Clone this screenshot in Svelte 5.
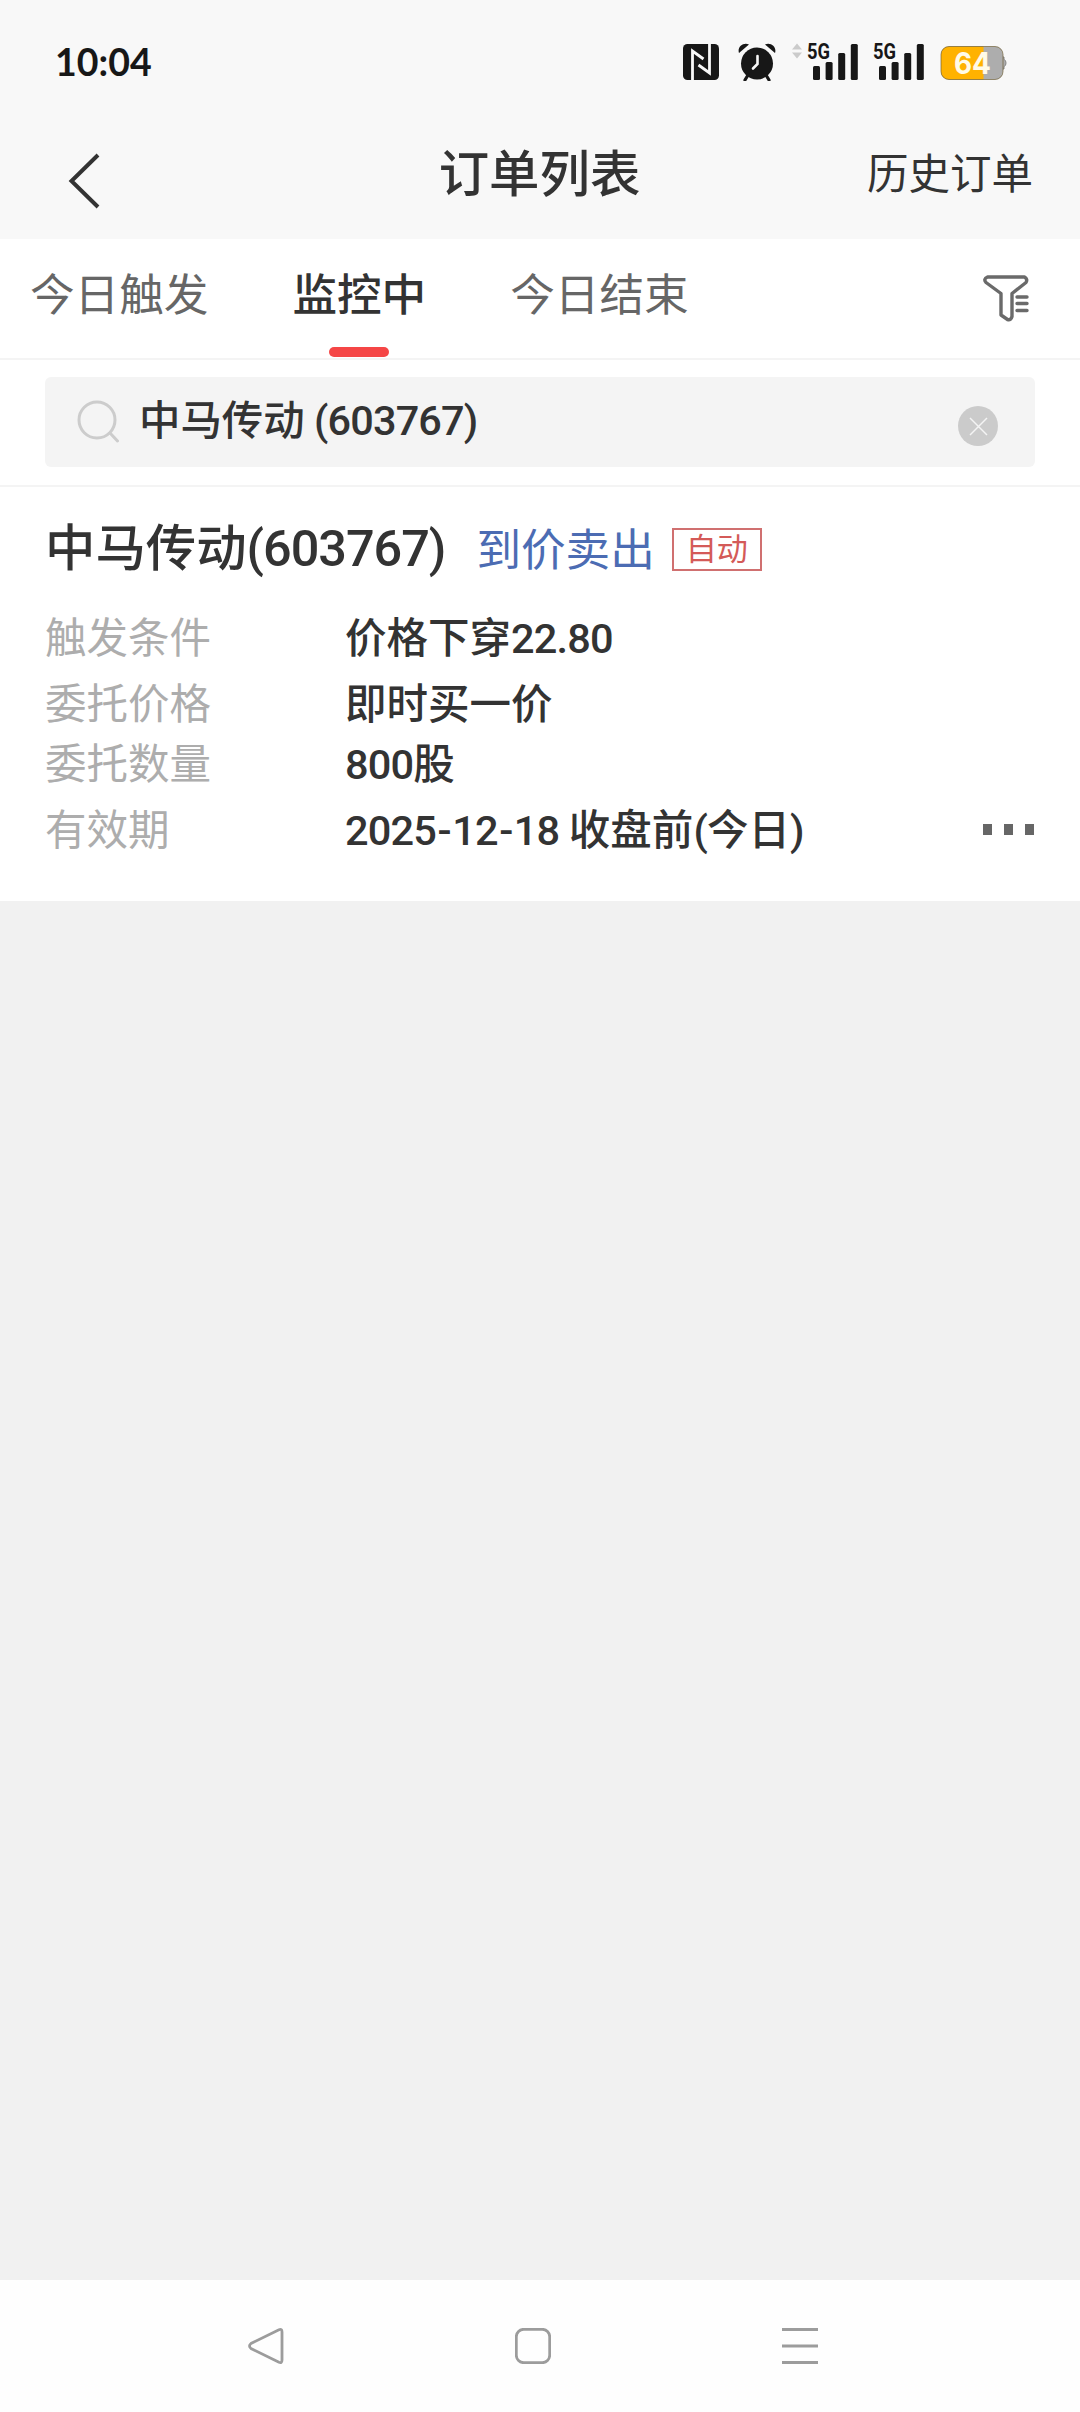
<script lang="ts">
	interface Tab {
		id: string;
		label: string;
	}

	interface OrderRow {
		label: string;
		value: string;
	}

	const tabs: Tab[] = [
		{ id: 'triggered', label: '今日触发' },
		{ id: 'watching', label: '监控中' },
		{ id: 'finished', label: '今日结束' }
	];

	const rows: OrderRow[] = [
		{ label: '触发条件', value: '价格下穿22.80' },
		{ label: '委托价格', value: '即时买一价' },
		{ label: '委托数量', value: '800股' },
		{ label: '有效期', value: '2025-12-18 收盘前(今日)' }
	];

	const signalBars = [14, 18, 27, 36];

	let activeTab = $state('watching');
	let keyword = $state('中马传动 (603767)');

	// digits are set a little tighter than the hanzi, dashes a little wider
	function splitText(text: string) {
		return text.match(/-|[\x20-\x2c\x2e-\x7e]+|[^\x20-\x7e]+/g) ?? [];
	}

	function isLatin(part: string) {
		return /^[\x20-\x7e]/.test(part);
	}
</script>

{#snippet mixed(text: string)}
	{#each splitText(text) as part}<span class:num={isLatin(part)} class:dash={part === '-'}
			>{part}</span
		>{/each}
{/snippet}

{#snippet signal()}
	<svg class="signal" width="52" height="54" viewBox="0 -8 52 54">
		<text x="0" y="16" textLength="23" lengthAdjust="spacingAndGlyphs">5G</text>
		{#each signalBars as height, i}
			<rect x={6 + i * 12.6} y={37 - height} width="7" {height} rx="1.5" />
		{/each}
	</svg>
{/snippet}

<div class="screen">
	<div class="status-bar">
		<span class="time">10:04</span>
		<div class="status-icons">
			<svg class="nfc" width="36" height="36" viewBox="0 0 36 36">
				<rect width="36" height="36" rx="4.5" fill="#171717" />
				<path
					d="M9.500 36V7l11 8M26.500 0v29L15.500 21"
					fill="none"
					stroke="#f8f8f8"
					stroke-width="2.8"
				/>
			</svg>
			<svg class="alarm" width="38" height="38" viewBox="0 0 38 38">
				<circle cx="19" cy="20.5" r="16" fill="#171717" />
				<path d="M1 10C-1 4 5-1 11 1.5zM37 10C39 4 33-1 27 1.5z" fill="#171717" />
				<path
					d="M10 32l-3 5M28 32l3 5"
					stroke="#171717"
					stroke-width="3.2"
					stroke-linecap="round"
				/>
				<path
					d="M19.5 13v8l-4.500 4.500"
					fill="none"
					stroke="#f8f8f8"
					stroke-width="2.6"
					stroke-linecap="round"
				/>
			</svg>
			<svg class="traffic" width="10" height="16" viewBox="0 0 10 16">
				<path d="M5 .5l5 6H0zM5 15.5l5-6H0z" fill="#cbcbcb" />
			</svg>
			{@render signal()}
			{@render signal()}
			<svg class="battery" width="67" height="36" viewBox="0 0 67 36">
				<path d="M62 12h2v2.500q2 .5 2 3.500t-2 3.500V24h-2z" fill="#adadad" stroke="#858585" />
				<rect x="1" y="1.5" width="62" height="33" rx="8" fill="#adadad" />
				<path d="M43.500 1.500H9a8 8 0 0 0-8 8v17a8 8 0 0 0 8 8h34.500z" fill="#ffb200" />
				<rect
					x="1"
					y="1.5"
					width="62"
					height="33"
					rx="8"
					fill="none"
					stroke="#6b5a30"
					stroke-opacity=".65"
				/>
				<text x="14" y="29" textLength="37" lengthAdjust="spacingAndGlyphs">64</text>
			</svg>
		</div>
	</div>

	<header class="nav-bar">
		<button type="button" class="back" aria-label="返回">
			<svg width="34" height="56" viewBox="0 0 34 56">
				<path d="M31 2L4.500 28 31 54" fill="none" stroke="#333" stroke-width="4" />
			</svg>
		</button>
		<h1>订单列表</h1>
		<button type="button" class="history">历史订单</button>
	</header>

	<nav class="tabs">
		{#each tabs as tab}
			<button
				type="button"
				class="tab"
				class:active={activeTab === tab.id}
				onclick={() => (activeTab = tab.id)}
			>
				{tab.label}
			</button>
		{/each}
		<button type="button" class="filter" aria-label="筛选">
			<svg width="46" height="47" viewBox="0 0 46 47">
				<g fill="none" stroke="#6a6a6a" stroke-width="3.4" stroke-linejoin="round">
					<path
						d="M4.500 2h37q3.500 2 1.500 5.500L29 18.500v23q-1 4-4.500 3l-6.500-4.500V18.500L3 7.500Q0 4 4.500 2z"
					/>
					<path d="M34 22h10M34 28.500h10M34 35.500h10" stroke-linecap="round" />
				</g>
			</svg>
		</button>
	</nav>

	<div class="search">
		<div class="search-box">
			<svg width="43" height="43" viewBox="0 0 43 43">
				<g fill="none" stroke="#ccc" stroke-width="3" stroke-linecap="round">
					<circle cx="20" cy="20" r="18" />
					<path d="M33 33l7.500 8" />
				</g>
			</svg>
			<span class="keyword">{@render mixed(keyword)}</span>
			<button type="button" class="clear" aria-label="清除" onclick={() => (keyword = '')}>
				<svg width="40" height="40" viewBox="0 0 40 40">
					<circle cx="20" cy="20" r="20" fill="#cbcbcb" />
					<path d="M12 12l17 17M29 12L12 29" stroke="#f4f4f4" stroke-width="1.5" />
				</svg>
			</button>
		</div>
	</div>

	<article class="order">
		<div class="order-head">
			<h2>{@render mixed('中马传动(603767)')}</h2>
			<span class="kind">到价卖出</span>
			<span class="badge">自动</span>
		</div>
		<div class="order-body">
			<dl>
				{#each rows as row}
					<dt>{row.label}</dt>
					<dd>{@render mixed(row.value)}</dd>
				{/each}
			</dl>
			<button type="button" class="more" aria-label="更多"><i></i><i></i><i></i></button>
		</div>
	</article>

	<main class="empty"></main>

	<footer class="system-nav">
		<svg width="36" height="36" viewBox="0 0 36 36">
			<path d="M31 1.800Q34 .5 34 4v28q0 3.500-3 2.200L3 20.500Q0 18 3 15.500z" />
		</svg>
		<svg width="36" height="36" viewBox="0 0 36 36">
			<rect x="1.3" y="1.3" width="33.400" height="33.400" rx="7.500" />
		</svg>
		<svg width="36" height="36" viewBox="0 0 36 36">
			<path d="M0 1.500h36M0 18h36M0 34.500h36" />
		</svg>
	</footer>
</div>

<style>
	:global(body) {
		margin: 0;
		background-color: #f1f1f1;
	}

	.screen {
		display: flex;
		flex-direction: column;
		width: 1080px;
		height: 2412px;
		overflow: hidden;
		background-color: #f1f1f1;
		color: #333;
		font-family: Roboto, 'Noto Sans CJK SC', sans-serif;
	}

	button {
		padding: 0;
		border: none;
		background: none;
		color: inherit;
		font: inherit;
		cursor: pointer;
	}

	svg {
		display: block;
		flex: none;
	}

	h1,
	h2,
	dl,
	dd {
		margin: 0;
	}

	.status-bar {
		display: flex;
		align-items: center;
		justify-content: space-between;
		height: 124px;
		padding: 0 73px 0 55px;
		background-color: #f8f8f8;
		box-sizing: border-box;
	}

	.time {
		padding-bottom: 2px;
		color: #171717;
		font-family: Lato, sans-serif;
		font-size: 37.5px;
		font-weight: 700;
	}

	.status-icons {
		display: flex;
		align-items: center;
	}

	.alarm {
		margin-left: 19px;
	}

	.traffic {
		margin: 0 5px 22px 16px;
	}

	.signal {
		margin-right: 14px;
		fill: #171717;
	}

	.signal text {
		font-family: Roboto, sans-serif;
		font-size: 22px;
		font-weight: 700;
	}

	.battery {
		margin: 2px 0 0 1px;
	}

	.battery text {
		fill: #fffbe8;
		font-family: Inter, sans-serif;
		font-size: 30px;
		font-weight: 700;
	}

	.nav-bar {
		display: grid;
		grid-template-columns: 1fr auto 1fr;
		align-items: center;
		height: 115px;
		padding: 0 47px 14px 67px;
		background-color: #f8f8f8;
		box-sizing: border-box;
	}

	.back {
		justify-self: start;
		padding-top: 12px;
	}

	h1 {
		padding-right: 21px;
		font-size: 50.4px;
		font-weight: 500;
		line-height: 70px;
	}

	.history {
		justify-self: end;
		font-size: 41.5px;
		line-height: 70px;
	}

	.tabs {
		display: flex;
		align-items: stretch;
		gap: 84px;
		height: 121px;
		padding: 0 51px 0 30px;
		background-color: #fff;
		border-bottom: 2px solid #f4f4f4;
		box-sizing: border-box;
	}

	.tab {
		position: relative;
		padding-bottom: 14px;
		color: #666;
		font-size: 44.6px;
	}

	.tab.active {
		color: #333;
		font-weight: 500;
	}

	.tab.active::after {
		content: '';
		position: absolute;
		bottom: 1px;
		left: 50%;
		width: 60px;
		height: 10px;
		border-radius: 5px;
		background-color: #f54646;
		transform: translateX(-50%);
	}

	.filter {
		margin-left: auto;
	}

	.search {
		height: 127px;
		padding: 17px 45px;
		background-color: #fff;
		border-bottom: 2px solid #f4f4f4;
		box-sizing: border-box;
	}

	.search-box {
		display: flex;
		align-items: center;
		height: 90px;
		padding: 0 37px 0 32px;
		border-radius: 6px;
		background-color: #f4f4f4;
		box-sizing: border-box;
	}

	.search-box > svg {
		margin-bottom: 2px;
	}

	.keyword {
		flex: 1;
		padding: 0 0 11px 19px;
		font-size: 41.4px;
		font-weight: 500;
		white-space: pre;
	}

	.num {
		letter-spacing: -0.02em;
		white-space: pre;
	}

	.dash {
		padding: 0 0.035em;
	}

	.clear {
		padding-top: 8px;
	}

	.order {
		height: 414px;
		padding: 24px 45px 0;
		background-color: #fff;
		box-sizing: border-box;
	}

	.order-head {
		display: flex;
		align-items: center;
		height: 78px;
		padding-bottom: 12px;
		box-sizing: border-box;
	}

	h2 {
		font-size: 50.4px;
		font-weight: 500;
	}

	.kind {
		margin-left: 31px;
		padding-top: 5px;
		color: #4c6cb3;
		font-size: 44.6px;
	}

	.badge {
		margin: 11px 0 0 17px;
		padding: 1px 12px 0;
		border: 2px solid #d07070;
		color: #d45a58;
		font-size: 31px;
		line-height: 38px;
	}

	.order-body {
		display: flex;
		justify-content: space-between;
		align-items: flex-end;
	}

	dl {
		display: grid;
		grid-template-columns: 300px auto;
		grid-template-rows: 66px 66px 55px 77px;
		align-items: center;
		padding-top: 16px;
		font-size: 41.5px;
		line-height: 55px;
	}

	dt {
		color: #adadad;
	}

	dd {
		font-weight: 500;
	}

	.more {
		display: flex;
		gap: 12px;
		padding: 0 1px 34px 0;
	}

	.more i {
		width: 9px;
		height: 11px;
		background-color: #666;
	}

	.empty {
		flex: 1;
	}

	.system-nav {
		display: flex;
		align-items: center;
		gap: 231px;
		height: 132px;
		padding-left: 248px;
		background-color: #fefefe;
		box-sizing: border-box;
	}

	.system-nav svg {
		fill: none;
		stroke: #9c9c9c;
		stroke-width: 2.8;
	}
</style>
